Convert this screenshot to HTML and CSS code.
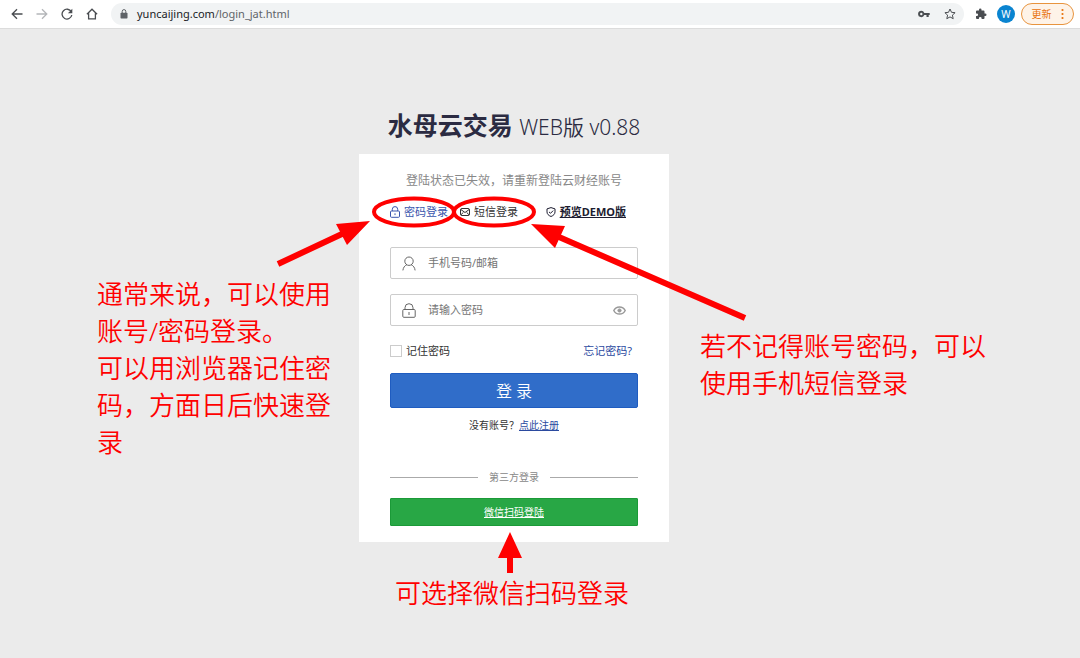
FILE: index.html
```
<!DOCTYPE html>
<html lang="zh-CN">

<head>
    <meta charset="UTF-8">
    <meta name="viewport" content="width=device-width, initial-scale=1.0">
    <title>水母云交易 WEB版</title>
    <link rel="stylesheet" href="styles.css">
</head>

<body>
    <header class="toolbar">
        <nav class="nav-buttons">
            <button type="button" class="icon-button" aria-label="后退">
                <svg width="12" height="12" viewBox="0 0 12 12"><path d="M11.5 6H1.2M6 1.2L1.2 6 6 10.8" /></svg>
            </button>
            <button type="button" class="icon-button faded" aria-label="前进">
                <svg width="12" height="12" viewBox="0 0 12 12"><path d="M.5 6h10.3M6 1.2L10.8 6 6 10.8" /></svg>
            </button>
            <button type="button" class="icon-button" aria-label="刷新">
                <svg width="12" height="12" viewBox="0 0 12 12"><path d="M10.3 3.8A4.9 4.9 0 1 0 10.8 7" /><path class="solid" d="M11.3.8v4.4H6.9z" /></svg>
            </button>
            <button type="button" class="icon-button" aria-label="主页">
                <svg width="12" height="12" viewBox="0 0 12 12"><path d="M.9 6.2L6 1.2l5.1 5M2.6 5.2v5.6h6.8V5.2" /></svg>
            </button>
        </nav>
        <div class="address-bar">
            <svg class="lock" width="8" height="10" viewBox="0 0 8 10"><rect x="0.5" y="3.8" width="7" height="5.7" rx="0.7" fill="#5f6368" /><path d="M2.2 4V2.4a1.8 1.8 0 0 1 3.6 0V4" fill="none" stroke="#5f6368" /></svg>
            <span class="url"><b>yuncaijing.com</b>/login_jat.html</span>
            <button type="button" class="icon-button" aria-label="密码">
                <svg width="12" height="12" viewBox="0 0 12 12"><path class="solid" fill-rule="evenodd" d="M3.3 2.8a3.2 3.2 0 1 0 3 4.3h2.2v2h2.2v-2h1V4.9H6.3a3.2 3.2 0 0 0-3-2.1zM3.3 4.8a1.2 1.2 0 1 1 0 2.4 1.2 1.2 0 0 1 0-2.4z" /></svg>
            </button>
            <button type="button" class="icon-button" aria-label="收藏">
                <svg width="12" height="12" viewBox="0 0 12 12"><path class="thin" d="M6 1l1.5 3.3 3.6.4-2.7 2.4.8 3.6L6 8.9l-3.2 1.8.8-3.6L.9 4.7l3.6-.4z" /></svg>
            </button>
        </div>
        <div class="tools">
            <button type="button" class="icon-button" aria-label="扩展程序">
                <svg width="12" height="12" viewBox="0 0 24 24"><path class="solid" d="M20.5 11H19V7a2 2 0 0 0-2-2h-4V3.5a2.5 2.5 0 0 0-5 0V5H4a2 2 0 0 0-2 2v3.8h1.5a2.7 2.7 0 0 1 0 5.4H2V20a2 2 0 0 0 2 2h3.8v-1.5a2.7 2.7 0 0 1 5.4 0V22H17a2 2 0 0 0 2-2v-4h1.5a2.5 2.5 0 0 0 0-5z" /></svg>
            </button>
            <button type="button" class="avatar">W</button>
            <button type="button" class="update">更新
                <svg width="3" height="12" viewBox="0 0 3 12" fill="#e8710a"><circle cx="1.5" cy="2" r="1.1" /><circle cx="1.5" cy="6" r="1.1" /><circle cx="1.5" cy="10" r="1.1" /></svg>
            </button>
        </div>
    </header>

    <main class="page">
        <h1 class="title">水母云交易 <span>WEB版 v0.88</span></h1>

        <div class="login">
            <p class="message">登陆状态已失效，请重新登陆云财经账号</p>

            <nav class="tabs">
                <a href="#" class="tab active">
                    <svg width="10" height="12" viewBox="0 0 10 12"><rect x="0.5" y="5" width="9" height="6.3" rx="1" /><path d="M2.3 5V3.3a2.7 2.7 0 0 1 5.4 0V5M5 7.3v1.8" /></svg>
                    密码登录
                </a>
                <a href="#" class="tab">
                    <svg width="10" height="8" viewBox="0 0 10 8"><rect x="0.5" y="0.5" width="9" height="7" rx="1.5" /><path d="M.8 1.5L5 4.5l4.2-3M.9 6.8l2.5-2.4M9.1 6.8L6.6 4.4" /></svg>
                    短信登录
                </a>
                <a href="#" class="tab demo">
                    <svg width="10" height="10" viewBox="0 0 10 10"><path d="M5 .6l4 1.3v3C9 7 7.5 8.5 5 9.5 2.5 8.5 1 7 1 4.9v-3zM3 4.9l1.5 1.4L7.2 3.6" /></svg>
                    <span>预览DEMO版</span>
                </a>
            </nav>

            <form class="login-form">
                <div class="field">
                    <svg width="14" height="15" viewBox="0 0 14 15"><circle cx="7" cy="5.2" r="4.2" /><path d="M.9 14.4c.3-2.8 1.7-4.7 4-5.7M13.1 14.4c-.3-2.8-1.7-4.7-4-5.7" /></svg>
                    <input type="text" name="account" aria-label="账号" placeholder="手机号码/邮箱">
                </div>
                <div class="field">
                    <svg width="14" height="15" viewBox="0 0 14 15"><rect x="0.8" y="6.5" width="12.4" height="7.8" rx="1" /><path d="M3 6.5V4.7a4 4 0 0 1 8 0v1.8M7 9v3" /></svg>
                    <input type="password" name="password" aria-label="密码" placeholder="请输入密码">
                    <button type="button" class="eye" aria-label="显示密码">
                        <svg width="13" height="9" viewBox="0 0 13 9"><path d="M.8 4.5C2 2.1 4 .9 6.5.9s4.5 1.2 5.7 3.6C11 6.9 9 8.1 6.5 8.1S2 6.9.8 4.5z" /><circle cx="6.5" cy="4.5" r="1.6" /></svg>
                    </button>
                </div>
                <div class="options">
                    <label class="remember"><input type="checkbox" name="remember">记住密码</label>
                    <a href="#">忘记密码?</a>
                </div>
                <button type="submit" class="submit">登 录</button>
            </form>

            <p class="register">没有账号？<a href="#">点此注册</a></p>
            <div class="divider">第三方登录</div>
            <a href="#" class="wechat">微信扫码登陆</a>

            <!-- hints drawn over the form -->
            <svg class="marks" width="310" height="388" viewBox="0 0 310 388">
                <g fill="none" stroke="#f00">
                    <ellipse cx="55" cy="58" rx="40" ry="13.5" stroke-width="4" />
                    <ellipse cx="135" cy="58" rx="40" ry="13.5" stroke-width="4" />
                    <path d="M-81 110L-16 79.5M386 164L200 83M151 419V402" stroke-width="6" />
                </g>
                <path fill="#f00" d="M11 67L-23 70-12 91zM172 70L206 72 196 94zM151 378L139 404H163z" />
            </svg>
            <p class="note note-password">通常来说，可以使用<br>账号/密码登录。<br>可以用浏览器记住密<br>码，方面日后快速登<br>录</p>
            <p class="note note-sms">若不记得账号密码，可以<br>使用手机短信登录</p>
            <p class="note note-wechat">可选择微信扫码登录</p>
        </div>
    </main>
</body>

</html>
```

FILE: styles.css
```
* {
    box-sizing: border-box;
    margin: 0;
    padding: 0;
}

body {
    min-height: 100vh;
    background: #ebebeb;
    color: #333;
    font-family: "Noto Sans", "Noto Sans CJK SC", sans-serif;
    font-size: 11px;
    line-height: 20px;
    overflow-x: hidden;
}

button,
input {
    font: inherit;
    border: none;
    background: none;
}

button {
    cursor: pointer;
}

/* browser toolbar */
.toolbar {
    display: flex;
    align-items: center;
    height: 29px;
    padding: 0 6px 0 11px;
    background: #fff;
    border-bottom: 1px solid #dcdcdc;
}

.nav-buttons {
    display: flex;
    gap: 13px;
    margin-right: 13px;
}

.icon-button {
    display: flex;
    width: 12px;
    height: 12px;
}

.icon-button path {
    fill: none;
    stroke: #4a4d51;
    stroke-width: 1.3;
}

.icon-button .thin {
    stroke-width: 1;
}

.icon-button .solid {
    fill: #4a4d51;
    stroke: none;
}

.faded path {
    stroke: #b4b6b9;
}

.address-bar {
    flex: 1;
    display: flex;
    align-items: center;
    gap: 14px;
    height: 22px;
    padding: 0 8px 0 9px;
    border-radius: 11px;
    background: #f1f3f4;
}

.lock {
    margin-right: -5px;
}

.url {
    flex: 1;
    color: #5f6368;
}

.url b {
    color: #202124;
    font-weight: normal;
}

.tools {
    display: flex;
    align-items: center;
    margin-left: 11px;
}

.avatar {
    width: 18px;
    height: 18px;
    margin: 0 6px 0 10px;
    border-radius: 50%;
    background: #0a84d0;
    color: #fff;
    font-size: 10px;
    line-height: 18px;
}

.update {
    display: flex;
    align-items: center;
    justify-content: center;
    gap: 9px;
    width: 53px;
    height: 22px;
    border: 1px solid #e8943e;
    border-radius: 11px;
    background: #fef3e8;
    color: #e8710a;
    font-size: 10px;
}

/* login page */
.page {
    display: flex;
    flex-direction: column;
    align-items: center;
    padding: 76px 52px 0 0;
}

.title {
    margin-bottom: 7px;
    color: #2b2b42;
    font-size: 25px;
    line-height: 40px;
}

.title span {
    font-size: 21px;
    font-weight: 350;
}

.login {
    position: relative;
    width: 310px;
    padding: 17px 31px 16px;
    background: #fff;
}

.message {
    color: #888;
    font-size: 12px;
    text-align: center;
}

.tabs {
    display: flex;
    margin: 11px 0 25px;
}

.tab {
    display: flex;
    align-items: center;
    gap: 4px;
    margin-right: 12px;
    color: #333;
    text-decoration: none;
    white-space: nowrap;
}

.tab svg,
.field svg {
    fill: none;
    stroke: currentColor;
}

.active {
    color: #3a56ad;
}

.demo {
    margin: 0 0 0 auto;
    padding-right: 12px;
    color: #1c1c30;
    font-weight: bold;
}

.demo span {
    text-decoration: underline;
}

.field {
    display: flex;
    align-items: center;
    gap: 12px;
    height: 32px;
    margin-bottom: 15px;
    padding: 0 11px;
    border: 1px solid #ccc;
    border-radius: 2px;
    color: #666;
}

.field input {
    flex: 1;
    min-width: 0;
    outline: none;
}

.field input::placeholder {
    color: #757575;
}

.eye {
    display: flex;
    color: #999;
}

.eye path {
    stroke-width: 1.5;
}

.eye circle {
    fill: #999;
}

.options {
    display: flex;
    justify-content: space-between;
    padding-right: 6px;
}

.options a,
.register a {
    color: #2b4a9f;
}

.options a {
    text-decoration: none;
}

.remember {
    display: flex;
    align-items: center;
    gap: 4px;
}

.remember input {
    appearance: none;
    width: 12px;
    height: 12px;
    border: 1px solid #ccc;
    background: #fff;
}

.remember input:checked {
    background: #2f6cc8;
}

.submit {
    width: 100%;
    height: 35px;
    margin: 12px 0 7px;
    border: 1px solid #1f5cc0;
    border-radius: 2px;
    background: #306dc9;
    color: #fff;
    font-size: 16px;
    font-weight: 350;
}

.register {
    font-size: 10px;
    text-align: center;
}

.divider {
    display: flex;
    align-items: center;
    gap: 11px;
    margin: 32px 0 11px;
    color: #888;
    font-size: 10px;
}

.divider::before,
.divider::after {
    content: "";
    flex: 1;
    height: 1px;
    background: #aaa;
}

.wechat {
    display: block;
    border: 1px solid #1b9a38;
    border-radius: 1px;
    background: #28a745;
    color: #fff;
    font-size: 10px;
    line-height: 26px;
    text-align: center;
}

/* red hints */
.marks {
    position: absolute;
    top: 0;
    left: 0;
    overflow: visible;
    pointer-events: none;
}

.note {
    position: absolute;
    color: #f00;
    font-size: 26px;
    font-weight: 350;
    line-height: 37px;
    white-space: nowrap;
}

.note-password {
    top: 122px;
    left: -262px;
}

.note-sms {
    top: 174px;
    left: 341px;
}

.note-wechat {
    top: 421px;
    left: 36px;
}
```
